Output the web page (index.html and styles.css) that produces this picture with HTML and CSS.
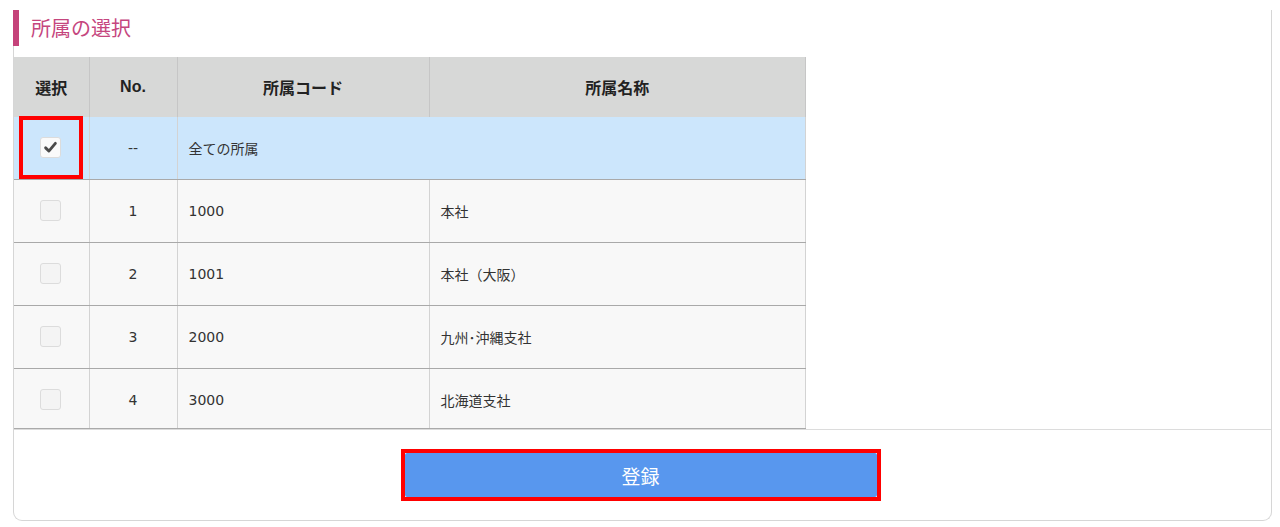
FILE: index.html
```html
<!DOCTYPE html>
<html lang="ja">
  <head>
    <meta charset="UTF-8" />
    <meta name="viewport" content="width=device-width, initial-scale=1.0" />
    <title>所属の選択</title>
    <link rel="stylesheet" href="styles.css">
  </head>
  <body>
    <div class="panel">
      <h2 class="title">所属の選択</h2>

      <div class="scroll">
        <div class="grid-wrap">
          <table class="grid">
            <thead>
              <tr>
                <th class="c-sel">選択</th>
                <th class="c-no">No.</th>
                <th class="c-code">所属コード</th>
                <th class="c-name">所属名称</th>
              </tr>
            </thead>
            <tbody>
              <tr class="all">
                <td class="c-sel">
                  <span class="mark"></span>
                  <span class="check on">
                    <svg viewBox="0 0 20 20" width="15" height="15">
                      <path d="M3.5 10.5 L7.8 14.8 L16.5 4.5" fill="none" stroke="#4a4a4a" stroke-width="3.8" stroke-linecap="round" stroke-linejoin="round" />
                    </svg>
                  </span>
                </td>
                <td class="c-no">--</td>
                <td colspan="2">全ての所属</td>
              </tr>
              <tr>
                <td class="c-sel"><span class="check"></span></td>
                <td class="c-no">1</td>
                <td>1000</td>
                <td>本社</td>
              </tr>
              <tr>
                <td class="c-sel"><span class="check"></span></td>
                <td class="c-no">2</td>
                <td>1001</td>
                <td>本社（大阪）</td>
              </tr>
              <tr>
                <td class="c-sel"><span class="check"></span></td>
                <td class="c-no">3</td>
                <td>2000</td>
                <td>九州･沖縄支社</td>
              </tr>
              <tr>
                <td class="c-sel"><span class="check"></span></td>
                <td class="c-no">4</td>
                <td>3000</td>
                <td>北海道支社</td>
              </tr>
            </tbody>
          </table>
        </div>
      </div>

      <div class="actions">
        <div class="btn-mark">
          <button class="btn">登録</button>
        </div>
      </div>
    </div>
  </body>
</html>
```

FILE: styles.css
```css
* {
  margin: 0;
  padding: 0;
  box-sizing: border-box;
}

body {
  background-color: #fff;
  font-family: "DejaVu Sans", "Noto Sans CJK JP", sans-serif;
  font-size: 14px;
  color: #333;
}

.panel {
  width: 1259px;
  margin-left: 13px;
  border: 1px solid #d6d6d6;
  border-top: none;
  border-radius: 0 0 9px 9px;
}

.title {
  height: 36px;
  margin: 10px 0 11px -1px;
  padding-left: 12px;
  border-left: 6px solid #c5437a;
  font-family: "Noto Sans CJK JP", sans-serif;
  font-size: 20px;
  font-weight: normal;
  line-height: 36px;
  color: #c5467e;
}

.scroll {
  height: 373px;
  border-bottom: 1px solid #dcdcdc;
}

.grid-wrap {
  width: 792px;
  height: 372px;
  overflow: hidden;
  border-bottom: 1px solid #aaa;
}

.grid {
  width: 792px;
  border-collapse: collapse;
  table-layout: fixed;
}

.grid th {
  height: 60px;
  background-color: #d7d8d7;
  border-right: 1px solid #c6c6c6;
  font-family: "Liberation Sans", "Noto Sans CJK JP", sans-serif;
  font-size: 16px;
  font-weight: bold;
  color: #222;
}

.grid td {
  height: 63px;
  padding: 0 11px;
  background-color: #f8f8f8;
  border-right: 1px solid #d3d3d3;
  border-bottom: 1px solid #a9a9a9;
}

.grid tr.all td {
  height: 62px;
  background-color: #cce6fc;
}

.c-sel {
  width: 75px;
}

.c-no {
  width: 88px;
}

.c-code {
  width: 252px;
}

.grid td.c-sel,
.grid td.c-no {
  text-align: center;
}

.grid td.c-sel {
  position: relative;
}

.check {
  display: inline-flex;
  align-items: center;
  justify-content: center;
  width: 21px;
  height: 21px;
  margin-left: -2px;
  vertical-align: middle;
  background-color: #f4f4f4;
  border: 1px solid #dcdcdc;
  border-radius: 3px;
}

.check.on {
  background-color: #fafafa;
}

/* 注記用の赤枠 */
.mark {
  position: absolute;
  left: 5px;
  top: -1px;
  width: 64px;
  height: 63px;
  border: 4px solid #f00;
}

.actions {
  display: flex;
  justify-content: center;
  padding: 19px 0 19px;
}

.btn-mark {
  margin-left: -4px;
  border: 4px solid #f00;
}

.btn {
  display: block;
  width: 472px;
  height: 44px;
  background-color: #5897ee;
  border: none;
  border-radius: 2px;
  color: #fff;
  font-family: "Noto Sans CJK JP", sans-serif;
  font-size: 19px;
}
```
